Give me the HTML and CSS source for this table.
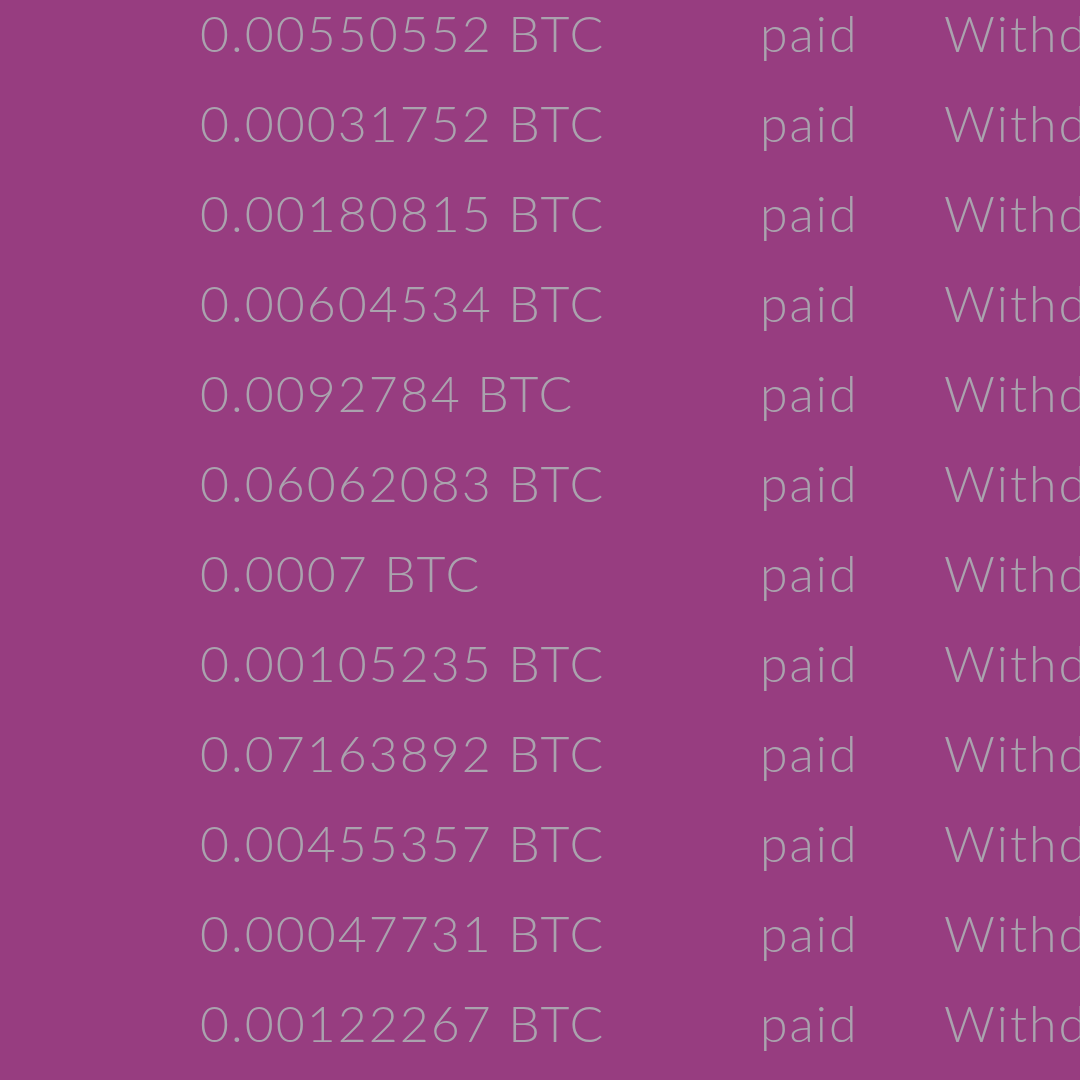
FILE: index.html
```html
<!DOCTYPE html>
<html>
<head>
<meta charset="utf-8">
<link rel="stylesheet" href="styles.css">
</head>
<body>
<div class="list">
  <div class="row"><span class="amt">0.00550552 BTC</span><span class="st">paid</span><span class="type">Withdrawal</span></div>
  <div class="row"><span class="amt">0.00031752 BTC</span><span class="st">paid</span><span class="type">Withdrawal</span></div>
  <div class="row"><span class="amt">0.00180815 BTC</span><span class="st">paid</span><span class="type">Withdrawal</span></div>
  <div class="row"><span class="amt">0.00604534 BTC</span><span class="st">paid</span><span class="type">Withdrawal</span></div>
  <div class="row"><span class="amt">0.0092784 BTC</span><span class="st">paid</span><span class="type">Withdrawal</span></div>
  <div class="row"><span class="amt">0.06062083 BTC</span><span class="st">paid</span><span class="type">Withdrawal</span></div>
  <div class="row"><span class="amt">0.0007 BTC</span><span class="st">paid</span><span class="type">Withdrawal</span></div>
  <div class="row"><span class="amt">0.00105235 BTC</span><span class="st">paid</span><span class="type">Withdrawal</span></div>
  <div class="row"><span class="amt">0.07163892 BTC</span><span class="st">paid</span><span class="type">Withdrawal</span></div>
  <div class="row"><span class="amt">0.00455357 BTC</span><span class="st">paid</span><span class="type">Withdrawal</span></div>
  <div class="row"><span class="amt">0.00047731 BTC</span><span class="st">paid</span><span class="type">Withdrawal</span></div>
  <div class="row"><span class="amt">0.00122267 BTC</span><span class="st">paid</span><span class="type">Withdrawal</span></div>
</div>
</body>
</html>
```
FILE: styles.css
```css
html, body {
  margin: 0;
  padding: 0;
  background: #973d80;
  width: 1080px;
  height: 1080px;
  overflow: hidden;
}
.list {
  margin-top: -12px;
  padding-left: 200px;
  font-family: "Lato", "Nunito", sans-serif;
  font-weight: 300;
  font-size: 50px;
  letter-spacing: 2px;
  color: #aaa3ae;
}
.row {
  display: grid;
  grid-template-columns: 560px 184px auto;
  height: 90px;
  line-height: 90px;
  white-space: nowrap;
}
.amt, .st, .type {
  display: block;
}
```
